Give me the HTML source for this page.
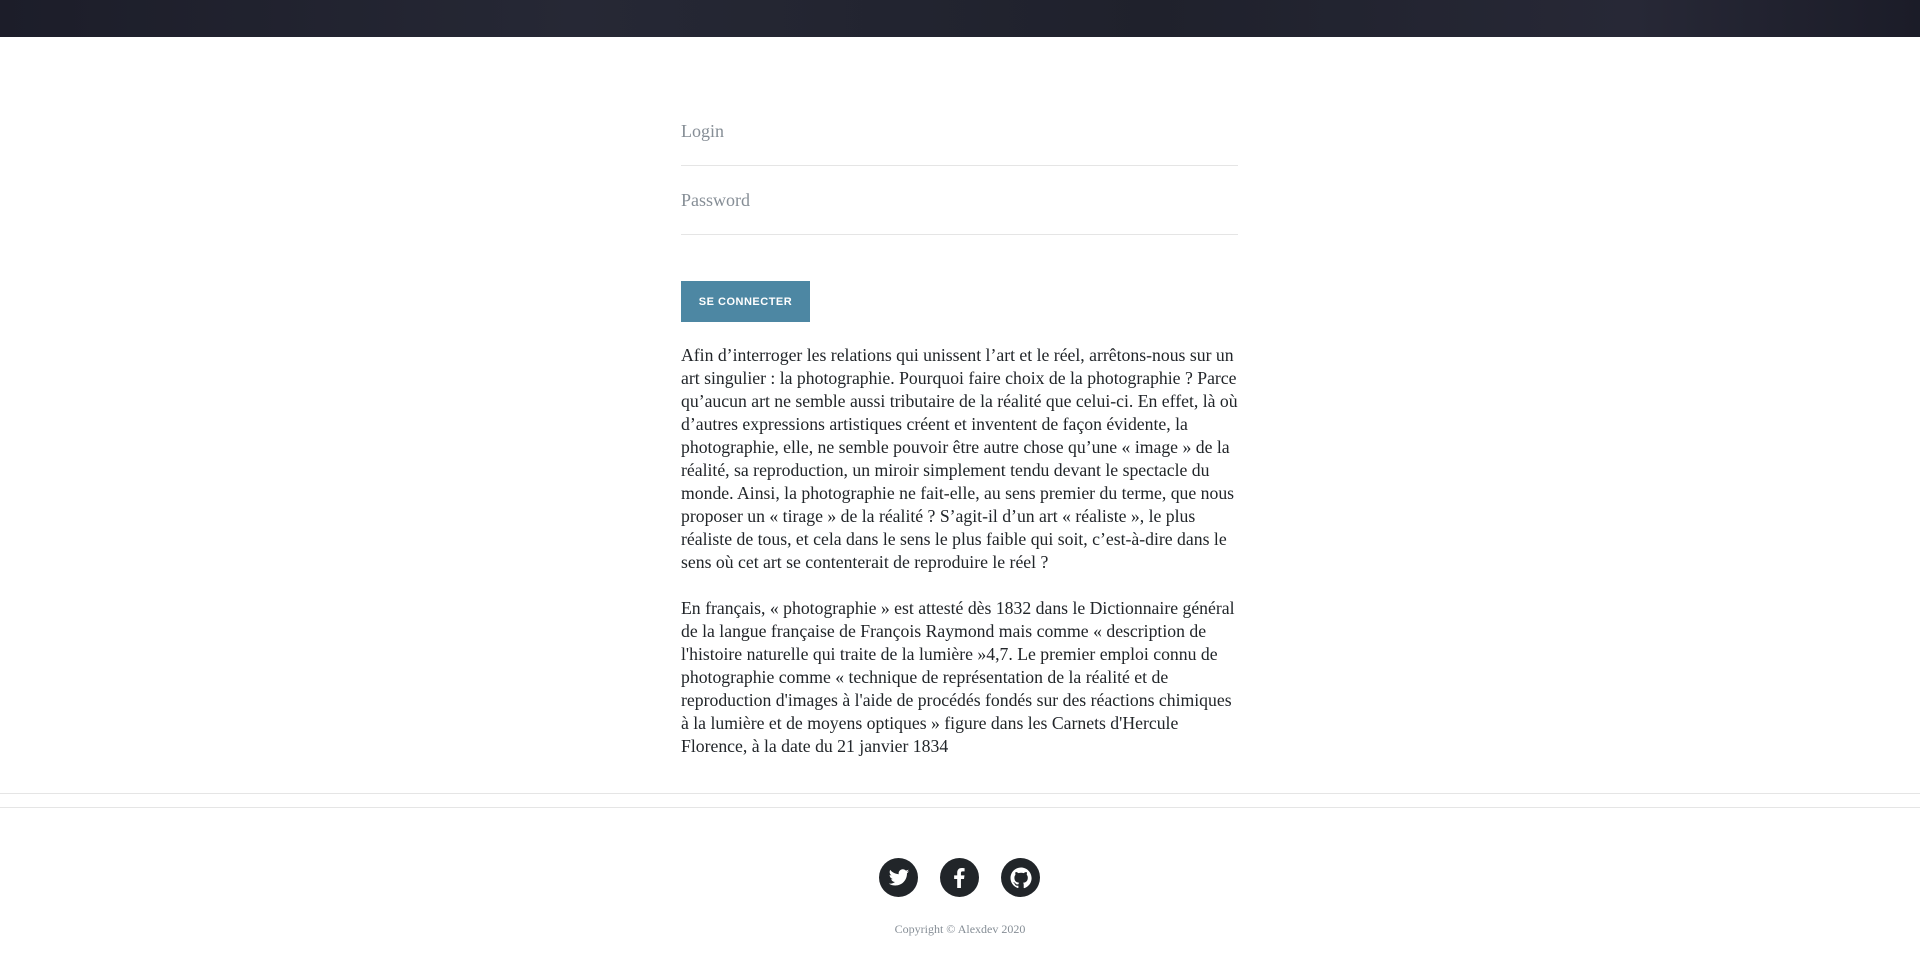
<!DOCTYPE html>
<html><head><meta charset="utf-8"><style>
html,body{margin:0;padding:0;background:#fff;width:1920px;height:980px;overflow:hidden}
body{font-family:"Liberation Serif",serif;color:#212529}
.hdr{position:absolute;left:0;top:0;width:1920px;height:37px;background:linear-gradient(90deg,#1c1d29,#262835 30%,#1f212c 60%,#272836 85%,#1b1c28)}
.col{position:absolute;left:681px;width:558px}
.lbl{position:absolute;left:681px;font-size:18px;color:#868e96}
.line{position:absolute;left:681px;width:557px;height:1px;background:#e5e5e5}
.btn{position:absolute;left:681px;top:281px;width:129px;height:41px;background:#4d87a3;color:#fff;font-family:"Liberation Sans",sans-serif;font-weight:bold;font-size:11px;letter-spacing:.5px;display:flex;align-items:center;justify-content:center}
p{margin:0 0 23px 0;font-size:17.7px;line-height:23px}
.hl{position:absolute;left:0;width:1920px;height:1px;background:#e5e5e5}
.ic{position:absolute;top:858px;width:39px;height:39px;border-radius:50%;background:#212529;display:flex;align-items:center;justify-content:center}
.copy{position:absolute;top:922px;left:0;width:1920px;text-align:center;font-size:12px;color:#868e96}
</style></head><body>
<div class="hdr"></div>
<div class="lbl" style="top:121px">Login</div>
<div class="line" style="top:165px"></div>
<div class="lbl" style="top:190px">Password</div>
<div class="line" style="top:234px"></div>
<div class="btn">SE CONNECTER</div>
<div class="col" style="top:344px">
<p>Afin d’interroger les relations qui unissent l’art et le réel, arrêtons-nous sur un art singulier : la photographie. Pourquoi faire choix de la photographie ? Parce qu’aucun art ne semble aussi tributaire de la réalité que celui-ci. En effet, là où d’autres expressions artistiques créent et inventent de façon évidente, la photographie, elle, ne semble pouvoir être autre chose qu’une « image » de la réalité, sa reproduction, un miroir simplement tendu devant le spectacle du monde. Ainsi, la photographie ne fait-elle, au sens premier du terme, que nous proposer un « tirage » de la réalité ? S’agit-il d’un art « réaliste », le plus réaliste de tous, et cela dans le sens le plus faible qui soit, c’est-à-dire dans le sens où cet art se contenterait de reproduire le réel ?</p>
<p>En français, « photographie » est attesté dès 1832 dans le Dictionnaire général de la langue française de François Raymond mais comme « description de l'histoire naturelle qui traite de la lumière »4,7. Le premier emploi connu de photographie comme « technique de représentation de la réalité et de reproduction d'images à l'aide de procédés fondés sur des réactions chimiques<br>à la lumière et de moyens optiques » figure dans les Carnets d'Hercule<br>Florence, à la date du 21 janvier 1834</p>
</div>
<div class="hl" style="top:793px"></div>
<div class="hl" style="top:807px"></div>
<div class="ic" style="left:879px"><svg width="22" height="22" viewBox="0 0 24 24"><path fill="#fff" d="M23 4.6c-.8.4-1.7.6-2.6.7.9-.6 1.6-1.4 2-2.5-.9.5-1.9.9-2.9 1.1C18.6 3 17.4 2.4 16.1 2.4c-2.5 0-4.5 2-4.5 4.5 0 .4 0 .7.1 1C7.9 7.7 4.6 5.9 2.4 3.2c-.4.7-.6 1.4-.6 2.3 0 1.6.8 2.9 2 3.7-.7 0-1.4-.2-2-.6v.1c0 2.2 1.6 4 3.6 4.4-.4.1-.8.2-1.2.2-.3 0-.6 0-.8-.1.6 1.800 2.2 3.1 4.2 3.1-1.5 1.2-3.5 1.9-5.6 1.9H1c2 1.3 4.4 2 6.9 2 8.3 0 12.8-6.9 12.8-12.8v-.6c.9-.6 1.7-1.4 2.3-2.3z"/></svg></div>
<div class="ic" style="left:940px"><svg width="23" height="23" viewBox="0 0 24 24"><path fill="#fff" d="M13.5 23v-9.5h3.2l.5-3.7h-3.7V7.4c0-1.1.3-1.8 1.8-1.8h2V2.3c-.3 0-1.5-.2-2.9-.2-2.9 0-4.8 1.7-4.8 5v2.7H6.4v3.7h3.2V23z"/></svg></div>
<div class="ic" style="left:1001px"><svg width="24" height="24" viewBox="0 0 24 24"><path fill="#fff" d="M12 1.5C6.2 1.5 1.5 6.2 1.5 12c0 4.6 3 8.6 7.2 10 .5.1.7-.2.7-.5v-1.8c-2.9.6-3.5-1.4-3.5-1.4-.5-1.2-1.2-1.5-1.200-1.5-1-.7.1-.6.1-.6 1 .1 1.6 1.1 1.6 1.1.9 1.6 2.5 1.1 3.1.9.1-.7.4-1.1.7-1.4-2.3-.3-4.8-1.2-4.8-5.2 0-1.1.4-2.1 1.1-2.8-.1-.3-.5-1.3.1-2.8 0 0 .9-.3 2.9 1.1.8-.2 1.7-.4 2.6-.4s1.8.1 2.6.4c2-1.4 2.9-1.1 2.9-1.1.6 1.5.2 2.5.1 2.8.7.7 1.1 1.7 1.1 2.8 0 4-2.5 4.9-4.8 5.2.4.3.7 1 .7 1.9v2.9c0 .3.2.6.7.5 4.2-1.4 7.2-5.4 7.2-10C22.5 6.2 17.8 1.5 12 1.5z"/></svg></div>
<div class="copy">Copyright © Alexdev 2020</div>
</body></html>
